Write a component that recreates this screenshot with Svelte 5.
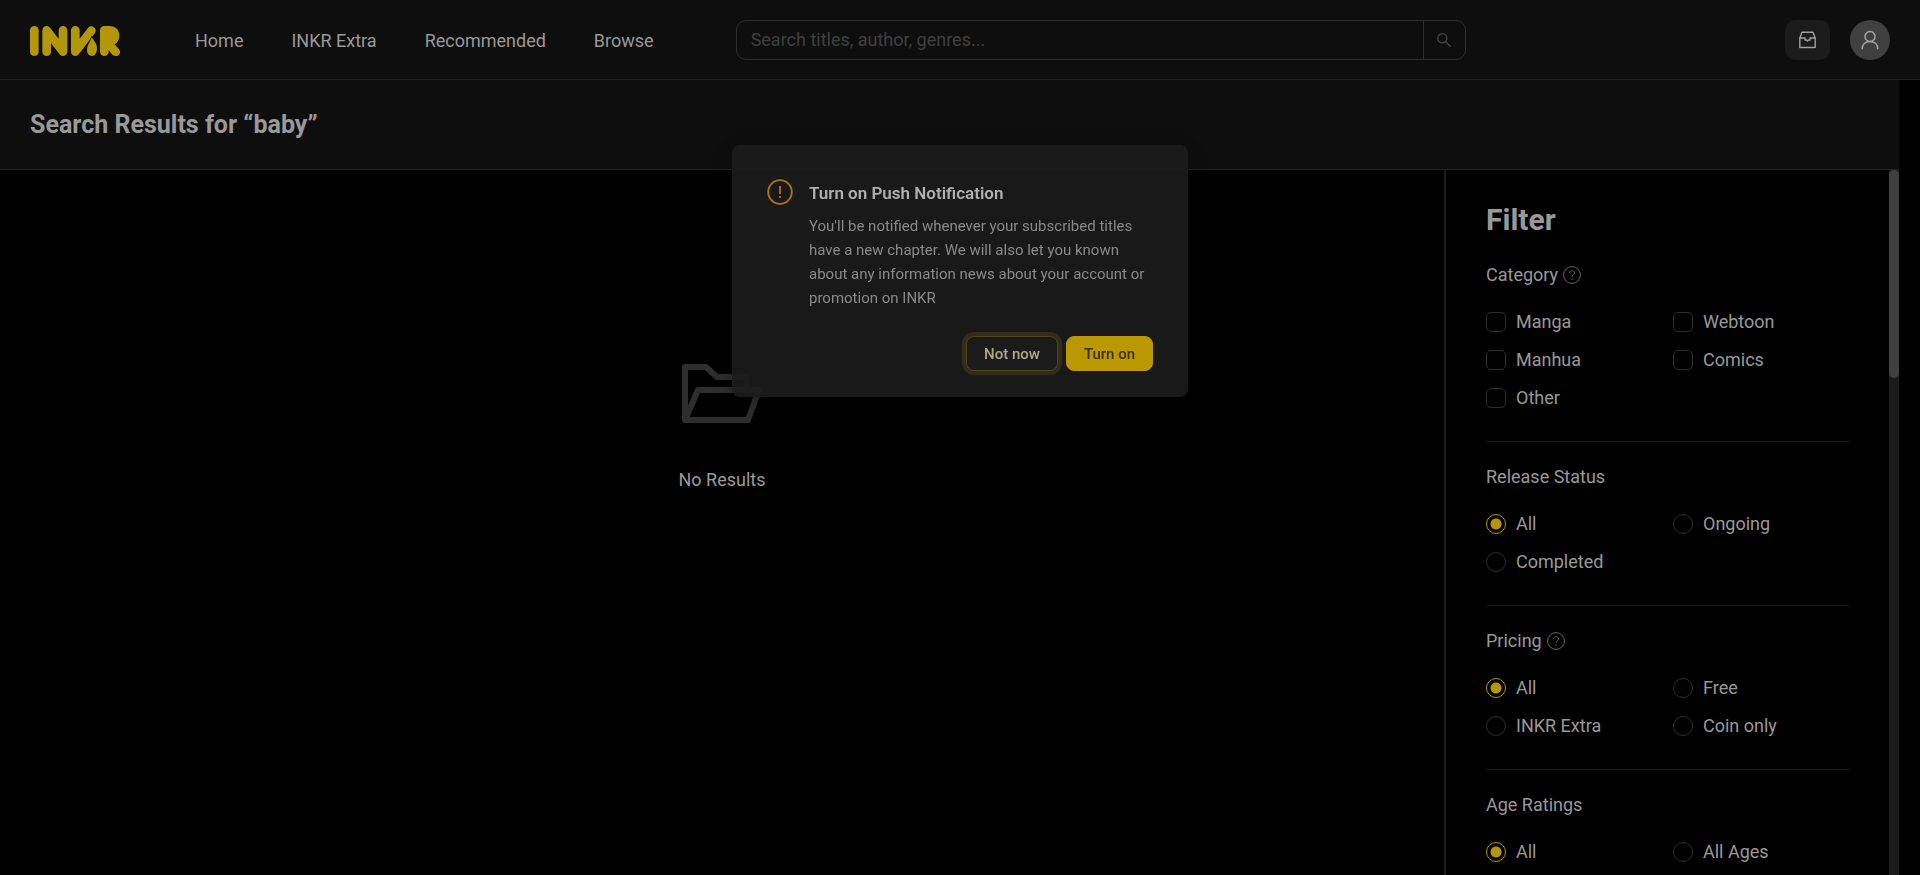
<script>
  const navItems = ['Home', 'INKR Extra', 'Recommended', 'Browse'];

  const groups = [
    { name: 'Category', type: 'checkbox', help: true, options: ['Manga', 'Webtoon', 'Manhua', 'Comics', 'Other'] },
    { name: 'Release Status', type: 'radio', help: false, options: ['All', 'Ongoing', 'Completed'] },
    { name: 'Pricing', type: 'radio', help: true, options: ['All', 'Free', 'INKR Extra', 'Coin only'] },
    { name: 'Age Ratings', type: 'radio', help: false, options: ['All', 'All Ages'] },
  ];
</script>

<div class="page">
  <header class="topbar">
    <a class="logo" href="#home" aria-label="INKR">
      <svg viewBox="0 0 270 90" width="90" height="30">
        <g fill="none" stroke="#b3960a" stroke-width="26" stroke-linecap="round" stroke-linejoin="round">
          <path d="M13 13V77" />
          <path d="M50 77V13L99 77V13" />
          <path d="M136 13V77L184 14" />
        </g>
        <path d="M185 34C192 45 201 53 201 67C201 81 195 90 186 90C177 90 171 82 171 73C171 58 180 49 185 34Z" fill="#b3960a" stroke="#0e0e0e" stroke-width="4" paint-order="stroke" />
        <path d="M210 14Q210 0 224 0H238C257 0 268 12 268 29C268 42 262 50 254 55L267 70C275 80 267 90 257 90C252 90 248 88 245 84L236 72V77a13 13 0 0 1-26 0Z" fill="#b3960a" />
      </svg>
    </a>
    <nav>
      {#each navItems as item}
        <a href="#nav">{item}</a>
      {/each}
    </nav>
    <form class="search" role="search">
      <input type="search" placeholder="Search titles, author, genres..." aria-label="Search titles" />
      <button type="button" aria-label="Search">
        <svg viewBox="0 0 14 14" width="14" height="14" fill="none" stroke="#484848" stroke-width="1.2">
          <circle cx="5.3" cy="5.3" r="4.6" /><path d="M8.7 8.7L13.5 13.5" />
        </svg>
      </button>
    </form>
    <div class="account">
      <button class="inbox" type="button" aria-label="Inbox">
        <svg viewBox="0 0 17 18" width="17" height="18" fill="none" stroke="#a0a0a0" stroke-width="1.4" stroke-linejoin="round">
          <path d="M.8 7V16.5H16.2V7L14 1.2H3L.8 7H6V9H7.5L8.5 10L9.5 9H11V7H16.2" />
        </svg>
      </button>
      <button class="avatar" type="button" aria-label="Account">
        <svg viewBox="0 0 18 20" width="18" height="20" fill="none" stroke="#a6a6a6" stroke-width="1.5">
          <circle cx="9" cy="6.5" r="5" /><path d="M1.2 19.2C1.2 14.5 4.4 11.6 9 11.6S16.8 14.5 16.8 19.2" />
        </svg>
      </button>
    </div>
  </header>

  <div class="body">
    <div class="heading"><h1>Search Results for “baby”</h1></div>
    <div class="columns">
      <main>
        <svg class="folder" viewBox="0 0 80 60" width="80" height="60" fill="none" stroke="#2e2e2e" stroke-width="6" stroke-linejoin="round">
          <path d="M64.500 26V14H35L24 4H3V57L16 27H77L66 57H3" />
        </svg>
        <p>No Results</p>
      </main>
      <aside>
        <div class="filters">
          <h2>Filter</h2>
          {#each groups as group}
            <fieldset>
              <legend>
                {group.name}
                {#if group.help}
                  <svg viewBox="0 0 18 18" width="18" height="18" fill="none" stroke="#666">
                    <circle cx="9" cy="9" r="8.4" />
                    <path d="M6.600 7.200C6.600 3.800 11.500 3.900 11.500 6.900C11.500 8.700 9 8.800 9 11M9 12.400V13.800" />
                  </svg>
                {/if}
              </legend>
              <div class="options">
                {#each group.options as option, i}
                  <label>
                    <input type={group.type} name={group.name} checked={group.type === 'radio' && i === 0} />
                    {option}
                  </label>
                {/each}
              </div>
            </fieldset>
          {/each}
        </div>
        <div class="track"><div class="thumb"></div></div>
      </aside>
    </div>
  </div>

  <div class="overlay">
    <div class="dialog" role="dialog" aria-labelledby="push-title">
      <svg viewBox="0 0 26 26" width="26" height="26" fill="none" stroke="#ae780c" stroke-width="1.800">
        <circle cx="13" cy="13" r="11.800" /><path d="M13 7V15M13 17V19" />
      </svg>
      <div class="message">
        <h3 id="push-title">Turn on Push Notification</h3>
        <p>You'll be notified whenever your subscribed titles have a new chapter. We will also let you known about any information news about your account or promotion on INKR</p>
      </div>
      <div class="actions">
        <button class="secondary" type="button">Not now</button>
        <button class="primary" type="button">Turn on</button>
      </div>
    </div>
  </div>
</div>

<style>
  :global(body) {
    margin: 0;
    background: #000;
    overflow: hidden;
  }
  .page {
    display: flex;
    flex-direction: column;
    height: 100vh;
    font-family: Roboto, sans-serif;
    font-size: 18px;
    line-height: 28px;
    color: #999;
  }
  .page * {
    box-sizing: border-box;
  }
  button, input {
    font: inherit;
    color: inherit;
    margin: 0;
  }
  svg {
    display: block;
    flex: none;
  }
  .topbar {
    display: grid;
    grid-template-columns: auto auto minmax(0, 730px) 1fr;
    align-items: center;
    flex: none;
    height: 80px;
    padding: 0 30px;
    background: #0e0e0e;
    border-bottom: 1px solid #222;
  }
  .logo {
    margin-top: 2px;
  }
  nav {
    display: flex;
    gap: 48px;
    margin: 2px 82px 0 75px;
  }
  nav a {
    color: inherit;
    text-decoration: none;
    white-space: nowrap;
  }
  .search {
    display: flex;
    height: 40px;
    border: 1px solid #2e2e2e;
    border-radius: 10px;
  }
  .search input {
    flex: 1;
    min-width: 0;
    padding: 0 14px;
    background: none;
    border: 0;
    outline: 0;
    appearance: none;
  }
  .search input::placeholder {
    color: #404040;
    opacity: 1;
  }
  .search button {
    display: grid;
    place-items: center;
    width: 42px;
    padding: 0;
    background: none;
    border: 0;
    border-left: 1px solid #2e2e2e;
  }
  .account {
    display: flex;
    justify-content: flex-end;
    align-items: center;
    gap: 20px;
  }
  .account button {
    display: grid;
    place-items: center;
    height: 40px;
    padding: 0;
    border: 0;
  }
  .inbox {
    width: 45px;
    border-radius: 10px;
    background: #1b1b1b;
  }
  .avatar {
    width: 40px;
    border-radius: 50%;
    background: #404040;
  }
  .body {
    display: flex;
    flex-direction: column;
    flex: 1;
    min-height: 0;
    margin-right: 21px;
  }
  .heading {
    display: flex;
    align-items: center;
    flex: none;
    height: 90px;
    padding: 0 30px;
    background: #0e0e0e;
    border-bottom: 1px solid #222;
  }
  h1, h2, h3, p {
    margin: 0;
  }
  h1 {
    font-size: 25px;
    line-height: 40px;
  }
  .columns {
    display: flex;
    flex: 1;
    min-height: 0;
  }
  main {
    display: flex;
    flex: 1;
    flex-direction: column;
    align-items: center;
    gap: 43px;
    padding-top: 193px;
  }
  aside {
    display: flex;
    width: 455px;
    border-left: 2px solid #1b1b1b;
  }
  .filters {
    flex: 1;
    padding: 26px 39px 0 40px;
    overflow: hidden;
  }
  h2 {
    margin-bottom: 17px;
    font-size: 30px;
    line-height: 48px;
  }
  fieldset {
    min-width: 0;
    margin: 0 0 21px;
    padding: 0 0 33px;
    border: 0;
    border-bottom: 1px solid #1b1b1b;
  }
  legend {
    display: flex;
    align-items: center;
    gap: 5px;
    padding: 0;
    margin-bottom: 23px;
  }
  .options {
    display: grid;
    grid-template-columns: 187px 1fr;
    row-gap: 18px;
  }
  label {
    display: flex;
    align-items: center;
    gap: 10px;
    height: 20px;
    white-space: nowrap;
  }
  label input {
    appearance: none;
    width: 20px;
    height: 20px;
    border: 1px solid #2e2e2e;
    border-radius: 5px;
  }
  input[type='radio'] {
    border-radius: 50%;
  }
  input[type='radio']:checked {
    border-color: #b3960a;
    background: radial-gradient(circle, #b3960a 5px, transparent 6px);
  }
  .track {
    width: 10px;
    background: #1b1b1b;
  }
  .thumb {
    height: 29.5%;
    border-radius: 5px;
    background: #404040;
  }
  .overlay {
    position: fixed;
    inset: 0;
    display: flex;
    justify-content: center;
    align-items: flex-start;
    padding-top: 145px;
  }
  .dialog {
    display: grid;
    grid-template-columns: 26px 1fr;
    column-gap: 16px;
    width: 456px;
    padding: 34px 35px 26px;
    border-radius: 8px;
    background: rgba(28, 28, 28, 0.9);
    box-shadow: 0 4px 16px rgba(0, 0, 0, 0.3);
  }
  h3 {
    margin-bottom: 7px;
    font-size: 17px;
    line-height: 28px;
    font-weight: 600;
    color: #b0b0b0;
  }
  .message p {
    font-size: 15px;
    line-height: 24px;
    color: #8a8a8a;
  }
  .actions {
    display: flex;
    grid-column: 1 / -1;
    justify-content: flex-end;
    gap: 8px;
    margin-top: 26px;
  }
  .actions button {
    height: 35px;
    padding: 0 17px;
    border: 1px solid #655713;
    border-radius: 8px;
    font-size: 15px;
    font-weight: 500;
    line-height: 24px;
  }
  .actions .secondary {
    background: #1b1b1b;
    border-color: #50461b;
    color: #b0a98c;
    box-shadow: 0 0 0 4px #332d17;
  }
  .actions .primary {
    background: #bb9700;
    border-color: #bb9700;
    color: #3a3008;
  }
</style>
